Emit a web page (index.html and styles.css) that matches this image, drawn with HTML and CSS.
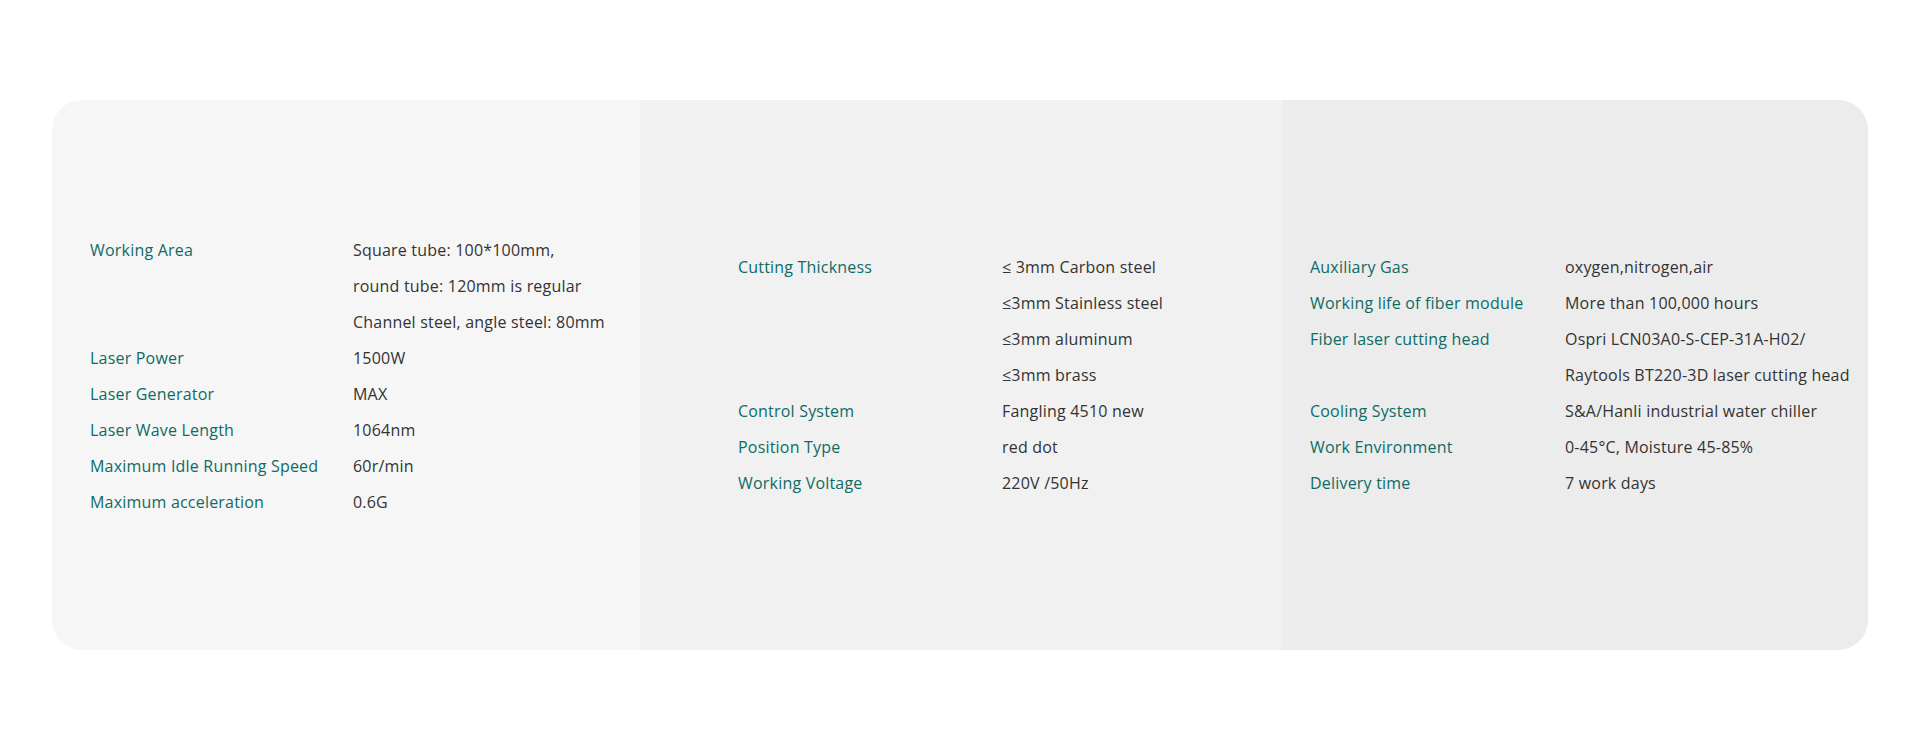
FILE: index.html
```html
<!DOCTYPE html>
<html lang="en">
<head>
<meta charset="utf-8">
<title>Specifications</title>
<link rel="stylesheet" href="styles.css">
</head>
<body>
<section class="specs">
  <div class="col col-1">
    <div class="row"><div class="label">Working Area</div><div class="value"><span>Square tube: 100*100mm,</span><span>round tube: 120mm is regular</span><span>Channel steel, angle steel: 80mm</span></div></div>
    <div class="row"><div class="label">Laser Power</div><div class="value"><span>1500W</span></div></div>
    <div class="row"><div class="label">Laser Generator</div><div class="value"><span>MAX</span></div></div>
    <div class="row"><div class="label">Laser Wave Length</div><div class="value"><span>1064nm</span></div></div>
    <div class="row"><div class="label">Maximum Idle Running Speed</div><div class="value"><span>60r/min</span></div></div>
    <div class="row"><div class="label">Maximum acceleration</div><div class="value"><span>0.6G</span></div></div>
  </div>
  <div class="col col-2">
    <div class="row"><div class="label">Cutting Thickness</div><div class="value"><span>≤ 3mm Carbon steel</span><span>≤3mm Stainless steel</span><span>≤3mm aluminum</span><span>≤3mm brass</span></div></div>
    <div class="row"><div class="label">Control System</div><div class="value"><span>Fangling 4510 new</span></div></div>
    <div class="row"><div class="label">Position Type</div><div class="value"><span>red dot</span></div></div>
    <div class="row"><div class="label">Working Voltage</div><div class="value"><span>220V /50Hz</span></div></div>
  </div>
  <div class="col col-3">
    <div class="row"><div class="label">Auxiliary Gas</div><div class="value"><span>oxygen,nitrogen,air</span></div></div>
    <div class="row"><div class="label">Working life of fiber module</div><div class="value"><span>More than 100,000 hours</span></div></div>
    <div class="row"><div class="label">Fiber laser cutting head</div><div class="value"><span>Ospri LCN03A0-S-CEP-31A-H02/</span><span>Raytools BT220-3D laser cutting head</span></div></div>
    <div class="row"><div class="label">Cooling System</div><div class="value"><span>S&amp;A/Hanli industrial water chiller</span></div></div>
    <div class="row"><div class="label">Work Environment</div><div class="value"><span>0-45°C, Moisture 45-85%</span></div></div>
    <div class="row"><div class="label">Delivery time</div><div class="value"><span>7 work days</span></div></div>
  </div>
</section>
</body>
</html>
```
FILE: styles.css
```css
html, body {
  margin: 0;
  padding: 0;
  background: #ffffff;
}

body {
  font-family: "Open Sans", "Noto Sans", sans-serif;
  font-size: 16px;
  line-height: 36px;
  letter-spacing: 0.2px;
  padding: 100px 52px;
}

.specs {
  display: grid;
  grid-template-columns: 588px 642px 1fr;
  height: 550px;
  border-radius: 30px;
  overflow: hidden;
}

.col {
  display: flex;
  flex-direction: column;
  justify-content: center;
}

.col-1 {
  background: #f6f6f6;
  padding: 2px 0 0 38px;
}

.col-2 {
  background: #f1f1f1;
  padding-left: 98px;
}

.col-3 {
  background: #ececec;
  padding-left: 28px;
}

.row {
  display: flex;
}

.label {
  color: #0e6b65;
  flex: none;
  white-space: nowrap;
}

.col-1 .label { width: 263px; }
.col-2 .label { width: 264px; }
.col-3 .label { width: 255px; }

.value {
  color: #333333;
  display: flex;
  flex-direction: column;
  white-space: nowrap;
}
```
